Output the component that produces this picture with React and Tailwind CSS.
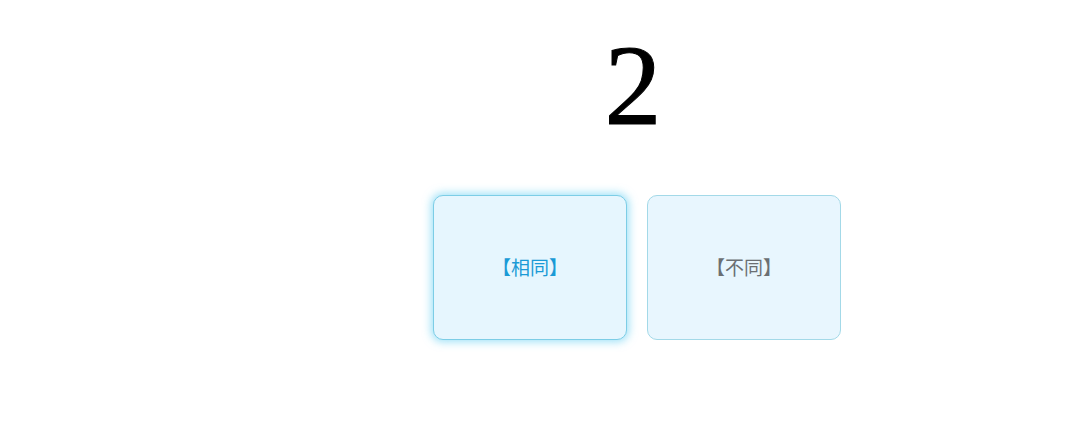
import { useState } from "react";

const choices = [
  { key: "same", label: "【相同】" },
  { key: "diff", label: "【不同】" },
];

export default function App() {
  const [picked, setPicked] = useState("same");

  return (
    <div className="flex h-[430px] w-[1080px] bg-white">
      <div className="w-[194px] shrink-0" />
      <div className="flex flex-1 flex-col items-center">
        <div className="mt-[23px] h-[125px] -translate-x-[4px] font-['Liberation_Serif',serif] text-[114px] leading-[125px] text-black [-webkit-text-stroke:1px_black]">
          2
        </div>
        <div className="mt-[47px] flex gap-[20px]">
          {choices.map((c) => {
            const active = picked === c.key;
            return (
              <button
                key={c.key}
                onClick={() => setPicked(c.key)}
                className={
                  active
                    ? "flex h-[145px] w-[194px] items-center justify-center rounded-[10px] border border-[#7ccde6] bg-[#e6f6fe] font-['Noto_Sans_CJK_SC',sans-serif] text-[19px] text-[#1a9ad6] shadow-[0_0_8px_2px_rgba(80,200,240,0.55)]"
                    : "flex h-[145px] w-[194px] items-center justify-center rounded-[10px] border border-[#a3d9e8] bg-[#e8f6fe] font-['Noto_Sans_CJK_SC',sans-serif] text-[19px] text-[#6b6f73]"
                }
              >
                {c.label}
              </button>
            );
          })}
        </div>
      </div>
    </div>
  );
}
